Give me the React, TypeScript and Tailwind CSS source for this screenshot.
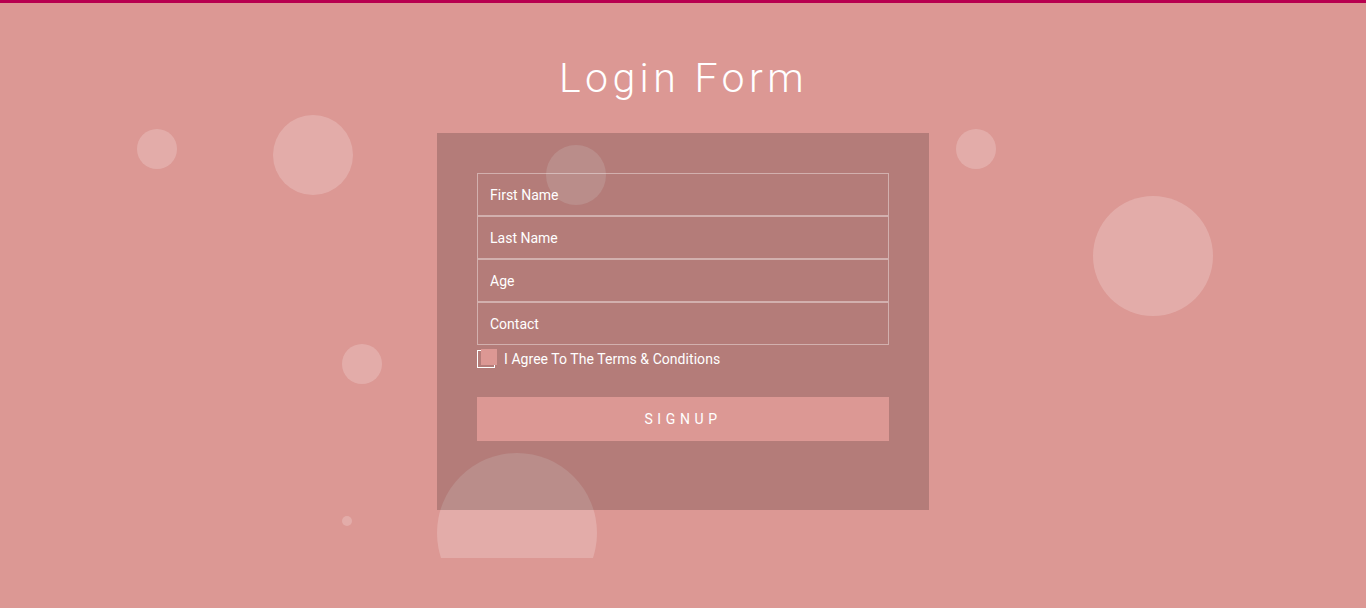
import React from 'react';

const bubbles = [
  { x: 137, y: 129, s: 40 },
  { x: 273, y: 115, s: 80 },
  { x: 546, y: 145, s: 60 },
  { x: 956, y: 129, s: 40 },
  { x: 1093, y: 196, s: 120 },
  { x: 342, y: 344, s: 40 },
  { x: 342, y: 516, s: 10 },
  { x: 437, y: 453, s: 160 },
];

const fields = ['First Name', 'Last Name', 'Age', 'Contact'];

export default function App() {
  return (
    <div
      className="min-h-[608px] bg-[#dc9894] text-white"
      style={{ fontFamily: 'Roboto, "Liberation Sans", sans-serif' }}
    >
      <div className="relative h-[558px] overflow-hidden border-t-[3px] border-[#b8004f]">
        {/* floating bubbles */}
        {bubbles.map((b, i) => (
          <div
            key={i}
            className="absolute rounded-full bg-white/20"
            style={{ left: b.x, top: b.y - 3, width: b.s, height: b.s }}
          />
        ))}

        <div className="relative flex flex-col items-center">
          <h1 className="mt-[47px] text-[41px] leading-[56px] font-light tracking-[4.4px] pl-[1px]">
            Login Form
          </h1>

          <form className="mt-[27px] w-[492px] bg-black/[0.18] px-10 pt-10 pb-[69px]">
            <div className="flex flex-col">
              {fields.map((f) => (
                <input
                  key={f}
                  type="text"
                  placeholder={f}
                  className="h-[43px] w-full border border-white/40 bg-transparent px-3 text-[14px] text-white placeholder:text-white outline-none"
                />
              ))}
            </div>

            <label className="mt-[4px] flex h-[20px] items-center gap-[9px] text-[14px] leading-[20px] tracking-[0.05px]">
              <span className="relative block h-[18px] w-[18px] border border-white">
                <span className="absolute left-[3px] top-[-2px] h-4 w-4 bg-[#dc9894]" />
              </span>
              <span>I Agree To The Terms &amp; Conditions</span>
            </label>

            <button
              type="button"
              className="mt-[28px] h-[44px] w-full bg-[#dc9894] text-[14px] tracking-[4.6px] text-white"
            >
              SIGNUP
            </button>
          </form>
        </div>
      </div>
    </div>
  );
}
